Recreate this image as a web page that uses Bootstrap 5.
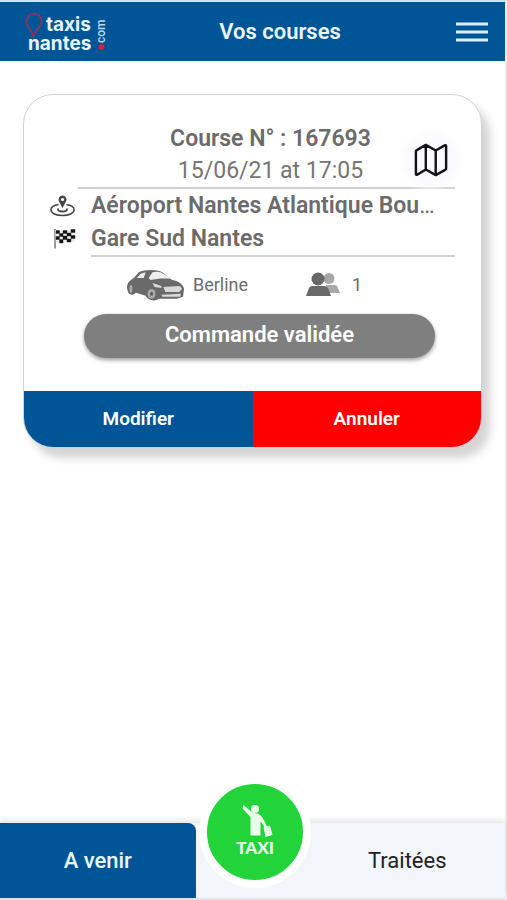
<!DOCTYPE html>
<html lang="fr">
<head>
<meta charset="utf-8">
<meta name="viewport" content="width=device-width, initial-scale=1">
<title>Vos courses</title>
<link href="https://cdn.jsdelivr.net/npm/bootstrap@5.3.0/dist/css/bootstrap.min.css" rel="stylesheet">
<style>
  :root { --brand: #005596; --ink: #6b6b6b; }
  body { font-family: Roboto, "Liberation Sans", sans-serif; color: var(--ink); background: #fff; line-height: 24px; }
  .app { border-top: 2px solid #cfe4f4; border-right: 2px solid #ececee; border-bottom: 2px solid #e4e6ec; }
  .topbar { background: var(--brand); height: 59px; padding: 0 17px 0 24px; }
  .topbar h1 { font-size: 22px; line-height: 28px; font-weight: 600; color: #eaf6ff; }
  .ride { margin: 33px 23px 0; border: 1px solid #d2d2d2; border-radius: 30px; box-shadow: 8px 10px 8px rgba(0,0,0,.17); overflow: hidden; }
  .ride-main { padding: 27px 26px 33px; }
  .ride-head { margin-left: 28px; border-bottom: 2px solid #d2d2d2; }
  .ride-title { font-size: 23px; line-height: 33px; font-weight: 600; padding-left: 8px; }
  .ride-date { font-size: 23px; line-height: 32px; padding-left: 8px; color: #757575; }
  .map-btn { position: absolute; right: 0; top: 14px; width: 48px; height: 48px; border-radius: 50%; background: #fafafd; box-shadow: 0 0 10px 4px #fafafd; }
  .stop { font-size: 23px; line-height: 33px; }
  .stop-name { font-weight: 600; }
  .stop-icon { width: 41px; flex: none; }
  .stops-rule { margin-left: 41px; border-bottom: 2px solid #d2d2d2; }
  .facts { height: 57px; padding: 0 0 2px 76px; font-size: 18px; }
  .fact-seats { margin-left: 58px; gap: 12px; }
  .status { margin: 0 20px 0 34px; height: 44px; padding-bottom: 3px; border-radius: 22px; background: #7f7f7f; color: #fff; font-size: 22px; font-weight: 600; box-shadow: 0 2px 4px rgba(0,0,0,.4); }
  .act { height: 56px; border-radius: 0; font-size: 19px; font-weight: 600; color: #fff; }
  .act-edit, .act-edit:hover { background: var(--brand); color: #fff; }
  .act-cancel, .act-cancel:hover { background: #f00; color: #fff; }
  .tabs { height: 75px; background: #f2f5fa; box-shadow: 0 -3px 6px rgba(0,0,0,.1); font-size: 22px; }
  .tab-btn { flex: 1 1 0; border-radius: 0; font-size: inherit; color: #222; }
  .tab-on, .tab-on:hover { background: var(--brand); color: #eaf6ff; font-weight: 500; border-top-right-radius: 8px; }
  .tab-gap { flex: 0 0 114px; }
  .taxi-btn { position: absolute; left: 50%; top: -47px; width: 112px; height: 112px; margin-left: -54px; border: 8px solid #fff; border-radius: 50%; background: #22d43a; }
</style>
<script src="https://cdn.jsdelivr.net/npm/bootstrap@5.3.0/dist/js/bootstrap.bundle.min.js"></script>
</head>
<body>
<div class="app d-flex flex-column min-vh-100">
  <header class="topbar d-flex align-items-center justify-content-between">
    <a href="#" aria-label="taxis nantes .com">
      <svg class="d-block overflow-visible" width="80" height="44" viewBox="0 0 80 44" font-family="Inter, sans-serif" font-weight="700">
        <path d="M9.500 26C8 20 2.500 17 2.500 11.500A7.500 8 0 0 1 17.500 11.500C17.500 17 11.500 20 9.500 26Z" fill="none" stroke="#7d3563" stroke-width="2"/>
        <text x="22" y="21" font-size="19" fill="#e6f5ff">taxis</text>
        <text x="4" y="40" font-size="19" fill="#e6f5ff">nantes</text>
        <text transform="translate(81 33) rotate(-90)" font-family="Roboto, sans-serif" font-size="12" font-weight="500" fill="#b9d9ee">com</text>
        <circle cx="77.500" cy="37" r="3" fill="#d3203f"/>
      </svg>
    </a>
    <h1 class="m-0 text-center">Vos courses</h1>
    <button class="btn p-0 border-0" type="button" aria-label="Menu">
      <svg class="d-block" width="32" height="20" viewBox="0 0 32 20" stroke="#d9efff" stroke-width="3"><path d="M0 2H32M0 10H32M0 18H32"/></svg>
    </button>
  </header>

  <main class="flex-grow-1">
    <section class="ride bg-white">
      <div class="ride-main">
        <div class="ride-head text-center position-relative">
          <h2 class="ride-title m-0">Course N° : 167693</h2>
          <div class="ride-date">15/06/21 at 17:05</div>
          <button class="map-btn btn p-0 border-0 d-flex align-items-center justify-content-center" type="button" aria-label="Carte">
            <svg width="34" height="34" viewBox="0 0 36 36" fill="none" stroke="#151518" stroke-width="2.600" stroke-linejoin="round"><path d="M2 9Q2 8 3 7.500L12.500 2L23 8L32.500 2.500Q34 2 34 3.500V27Q34 28 33 28.500L23 34L12.500 28L3.500 33.500Q2 34 2 32.500ZM12.500 2V28M23 8V34"/></svg>
          </button>
        </div>
        <div class="stop d-flex align-items-center">
          <span class="stop-icon"><svg class="d-block" width="25" height="22" viewBox="0 0 25 22" fill="none" stroke="#454545"><path d="M8.500 9.500C4 10.200 1 12 1 14.800C1 18.300 6 20.500 12.500 20.500S24 18.300 24 14.800C24 12 21 10.200 16.500 9.500" stroke-width="1.500"/><path d="M8.500 13.500C7 15.500 9.500 16.500 12.500 16.500S18 15.500 16.500 13.500" stroke-width="1.800"/><path d="M12.500 13L9 6.500A4 4 0 1 1 16 6.500Z" fill="#454545" stroke="none"/><circle cx="12.500" cy="4.500" r="1.600" fill="#fff" stroke="none"/></svg></span>
          <span class="text-truncate pe-3"><span class="stop-name">Aéroport Nantes Atlantique Bouguenais</span></span>
        </div>
        <div class="stop d-flex align-items-center">
          <span class="stop-icon ps-1"><svg class="d-block" width="22" height="21" viewBox="0 0 22 21"><path d="M1 1V20.500" stroke="#777" stroke-width="1.500"/><path d="M1 2C7 4 14 0 21 1.500V14C14 12.500 7 16.500 2 15Z" fill="#eee"/><path d="M2 2.500H5.500V5.500H2ZM9 2.500H13V5.500H9ZM17 1.500H21V4.500H17ZM5.500 5.500H9V8.500H5.500ZM13 5H17V8H13ZM2 8.500H5.500V11.500H2ZM9 8H13V11.500H9ZM17 7.500H21V10.500H17ZM5.500 11.500H9V15H5.500ZM13 11H17V14H13Z" fill="#151515" stroke="#151515" stroke-width=".4"/></svg></span>
          <span class="stop-name text-truncate">Gare Sud Nantes</span>
        </div>
        <div class="stops-rule"></div>
        <div class="facts d-flex align-items-center">
          <svg width="59" height="32" viewBox="0 0 60 32"><path d="M1 19C1 14 4 11 8 9L13 3C19 0 31 0 37 3L47 11C53 12 58 15 59 20L58 28L52 30H33C31 33 22 32 20 27L10 24C8 27 3 26 2 23Z" fill="#6a6a6a"/><path d="M11 9L15 4.500L20 3L18 9ZM23 9L27 3C31 2 35 2.500 37 4L47 10C41 9 32 9 25 11Z" fill="#eee"/><path d="M38 18L55 17L57 20L54 23H40ZM27 14L36 17V19L29 18ZM36 26L56 25L55 28H37Z" fill="#d9d9d9"/><ellipse cx="26" cy="25" rx="4" ry="5" fill="#a9a9a9"/><ellipse cx="26" cy="25" rx="1.500" ry="2" fill="#555"/><ellipse cx="5" cy="20" rx="1.500" ry="4" fill="#aaa"/></svg>
          <span class="ms-2">Berline</span>
          <span class="fact-seats d-flex align-items-center">
            <svg width="34" height="25" viewBox="0 0 34 25"><g fill="#a8a8a8"><circle cx="23" cy="6.500" r="5.500"/><path d="M20 13H29Q31 13 32 16L34 21H22Z"/></g><g fill="#696969"><circle cx="12" cy="7" r="6.500"/><path d="M6 14H18Q21 14 22 16L25 24H0L3 16Q4 14 6 14Z"/></g></svg>
            <span>1</span>
          </span>
        </div>
        <div class="status d-flex align-items-center justify-content-center">Commande validée</div>
      </div>
      <div class="d-flex">
        <button class="act act-edit btn border-0 w-50" type="button">Modifier</button>
        <button class="act act-cancel btn border-0 w-50" type="button">Annuler</button>
      </div>
    </section>
  </main>

  <nav class="tabs d-flex position-relative" aria-label="Courses">
    <button class="tab-btn tab-on btn border-0" type="button">A venir</button>
    <div class="tab-gap"></div>
    <button class="tab-btn btn border-0" type="button">Traitées</button>
    <button class="taxi-btn btn p-0" type="button" aria-label="TAXI">
      <svg class="d-block" width="96" height="96" viewBox="0 0 96 96" fill="#eaffea"><circle cx="48" cy="25" r="4"/><path d="M36.500 21L44 27.500Q47 29.500 51 29.500Q56 32 60 43L58 44L53.500 37V51.500H43.500V33L35.500 24.500Z"/><path d="M56.500 43.500L63 41.500L65.500 51L58.500 53Z"/><text x="48" y="70" text-anchor="middle" font-family="Lato, sans-serif" font-weight="900" font-size="17">TAXI</text></svg>
    </button>
  </nav>
</div>
</body>
</html>
